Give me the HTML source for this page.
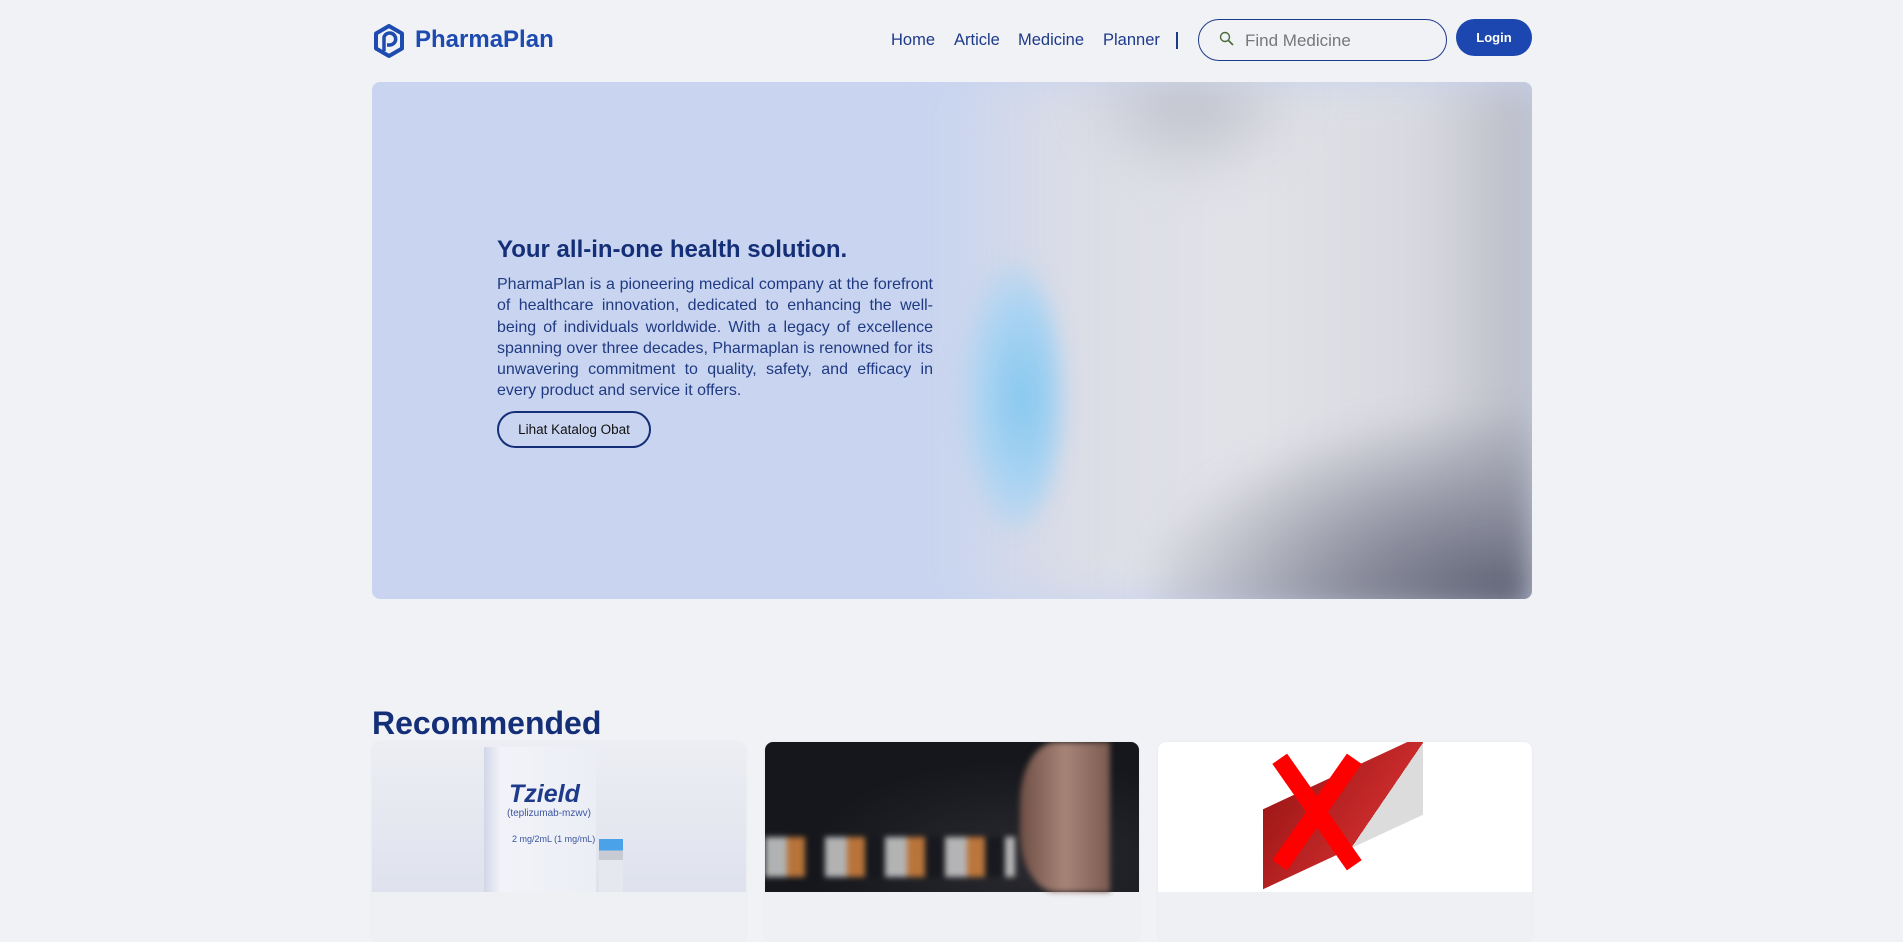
<!DOCTYPE html>
<html><head><meta charset="utf-8"><style>
*{margin:0;padding:0;box-sizing:border-box}
body{width:1903px;height:916px;overflow:hidden;background:#f0f2f6;font-family:"Liberation Sans",sans-serif;position:relative}
.abs{position:absolute}
.logo{left:373px;top:24px;width:32px;height:34px}
.brand{left:415px;top:26px;font-size:24px;font-weight:bold;color:#1e4bb0}
.nav a{position:absolute;top:31px;font-size:16.5px;color:#1e3a8a;text-decoration:none}
.sep{left:1176px;top:32px;width:2px;height:17px;background:#1e3a8a}
.search{left:1198px;top:19px;width:249px;height:42px;border:1.5px solid #1e3a8a;border-radius:21px}
.search span{position:absolute;left:46px;top:11px;font-size:17px;color:#777}
.login{left:1456px;top:19px;width:76px;height:37px;border-radius:19px;background:#1c47b0;color:#fff;font-size:13px;font-weight:bold;text-align:center;line-height:37px}
.hero{left:372px;top:82px;width:1160px;height:517px;border-radius:8px;overflow:hidden;background:#c9d5f0}
.h1{left:497px;top:236px;font-size:24px;font-weight:bold;color:#142f78}
.p{left:497px;top:274px;width:436px;font-size:16px;line-height:21.3px;color:#1f3a82;text-align:justify}
.btn{left:497px;top:411px;width:154px;height:37px;border:2px solid #142f78;border-radius:19px;font-size:13.5px;color:#111;text-align:center;line-height:33px}
.rec{left:372px;top:705px;font-size:32px;font-weight:bold;color:#142f78}
.card{top:742px;width:374px;height:200px;border-radius:8px;overflow:hidden;background:#eef0f4;box-shadow:0 0 3px rgba(0,0,0,.05)}
.img{position:absolute;left:0;top:0;width:100%;height:150px}
</style></head><body>
<svg class="abs logo" viewBox="0 0 32 34"><path d="M16 2 L29 9.5 V24.5 L16 32 L3 24.5 V9.5 Z" fill="none" stroke="#1e4bb0" stroke-width="4" stroke-linejoin="round"/><path d="M11 27 V13 a6 6 0 1 1 6 8 h-3" fill="none" stroke="#1e4bb0" stroke-width="3.5"/></svg>
<div class="abs brand">PharmaPlan</div>
<div class="nav"><a style="left:891px">Home</a><a style="left:954px">Article</a><a style="left:1018px">Medicine</a><a style="left:1103px">Planner</a></div>
<div class="abs sep"></div>
<div class="abs search"><svg class="abs" style="left:20px;top:11px" width="16" height="16" viewBox="0 0 16 16"><circle cx="6" cy="6" r="4.5" fill="none" stroke="#4a6a3a" stroke-width="1.4"/><path d="M9.5 9.5 L14 14" stroke="#4a6a3a" stroke-width="1.6"/></svg><span>Find Medicine</span></div>
<div class="abs login">Login</div>
<div class="abs hero">
<div class="abs" style="left:570px;top:0;width:600px;height:517px;background:linear-gradient(90deg,rgba(201,213,240,0) 0%,#dadce6 20%,#e2e3e8 50%,#d8d9e0 80%,#b5b7c2 100%);filter:blur(20px)"></div>
<div class="abs" style="left:780px;top:330px;width:380px;height:200px;background:radial-gradient(ellipse at 100% 100%,#55586b 0%,#8a8c9c 35%,rgba(210,212,220,0) 75%);filter:blur(15px)"></div>
<div class="abs" style="left:590px;top:180px;width:100px;height:270px;border-radius:50%;background:radial-gradient(ellipse at 60% 50%,#86c8ef,#add4f2 50%,rgba(180,210,240,0) 80%);filter:blur(10px)"></div>
<div class="abs" style="left:700px;top:0;width:240px;height:110px;background:radial-gradient(ellipse at 50% 0%,#b8bac6,rgba(220,222,228,0) 70%);filter:blur(20px)"></div>
</div>
<div class="abs h1">Your all-in-one health solution.</div>
<div class="abs p">PharmaPlan is a pioneering medical company at the forefront of healthcare innovation, dedicated to enhancing the well-being of individuals worldwide. With a legacy of excellence spanning over three decades, Pharmaplan is renowned for its unwavering commitment to quality, safety, and efficacy in every product and service it offers.</div>
<div class="abs btn">Lihat Katalog Obat</div>
<div class="abs rec">Recommended</div>
<div class="abs card" style="left:372px"><div class="img" style="background:linear-gradient(#eceef3,#dfe2ee)">
<div class="abs" style="left:112px;top:5px;width:112px;height:145px;background:linear-gradient(90deg,#d2d6e8,#f2f3f8 15%,#eceef6);"></div>
<div class="abs" style="left:137px;top:38px;font-size:25px;font-weight:bold;color:#1e3a8a;font-style:italic">Tzield</div>
<div class="abs" style="left:135px;top:66px;font-size:10px;color:#3a55a0">(teplizumab-mzwv)</div>
<div class="abs" style="left:140px;top:92px;font-size:9px;color:#3a55a0">2 mg/2mL (1 mg/mL)</div>
<div class="abs" style="left:227px;top:97px;width:24px;height:53px;background:linear-gradient(#4aa3e8 0 22%,#c8cbd4 22% 40%,#e6e8f0 40%)"></div>
</div></div>
<div class="abs card" style="left:765px"><div class="img" style="background:radial-gradient(ellipse at 70% 80%,#2a2a30,#15171c 60%)">
<div class="abs" style="left:255px;top:0;width:90px;height:150px;background:linear-gradient(90deg,#6e4f45,#a88478,#7a5a50);border-radius:40% 0 0 40%;filter:blur(3px)"></div>
<div class="abs" style="left:0;top:95px;width:250px;height:40px;background:repeating-linear-gradient(90deg,#d9d9d9 0 22px,#e08a40 22px 40px,#15171c 40px 60px);filter:blur(3px);opacity:.8"></div>
</div></div>
<div class="abs card" style="left:1158px"><div class="img" style="background:#fff">
<div class="abs" style="left:105px;top:30px;width:160px;height:80px;background:linear-gradient(135deg,#a01818,#c82a2a 70%,#dcdcdc 70%);transform:skewY(-25deg)"></div>
<div class="abs" style="left:150px;top:5px;width:18px;height:130px;background:#f00;transform:rotate(-35deg)"></div>
<div class="abs" style="left:150px;top:5px;width:18px;height:130px;background:#f00;transform:rotate(35deg)"></div>
</div></div>
</body></html>
